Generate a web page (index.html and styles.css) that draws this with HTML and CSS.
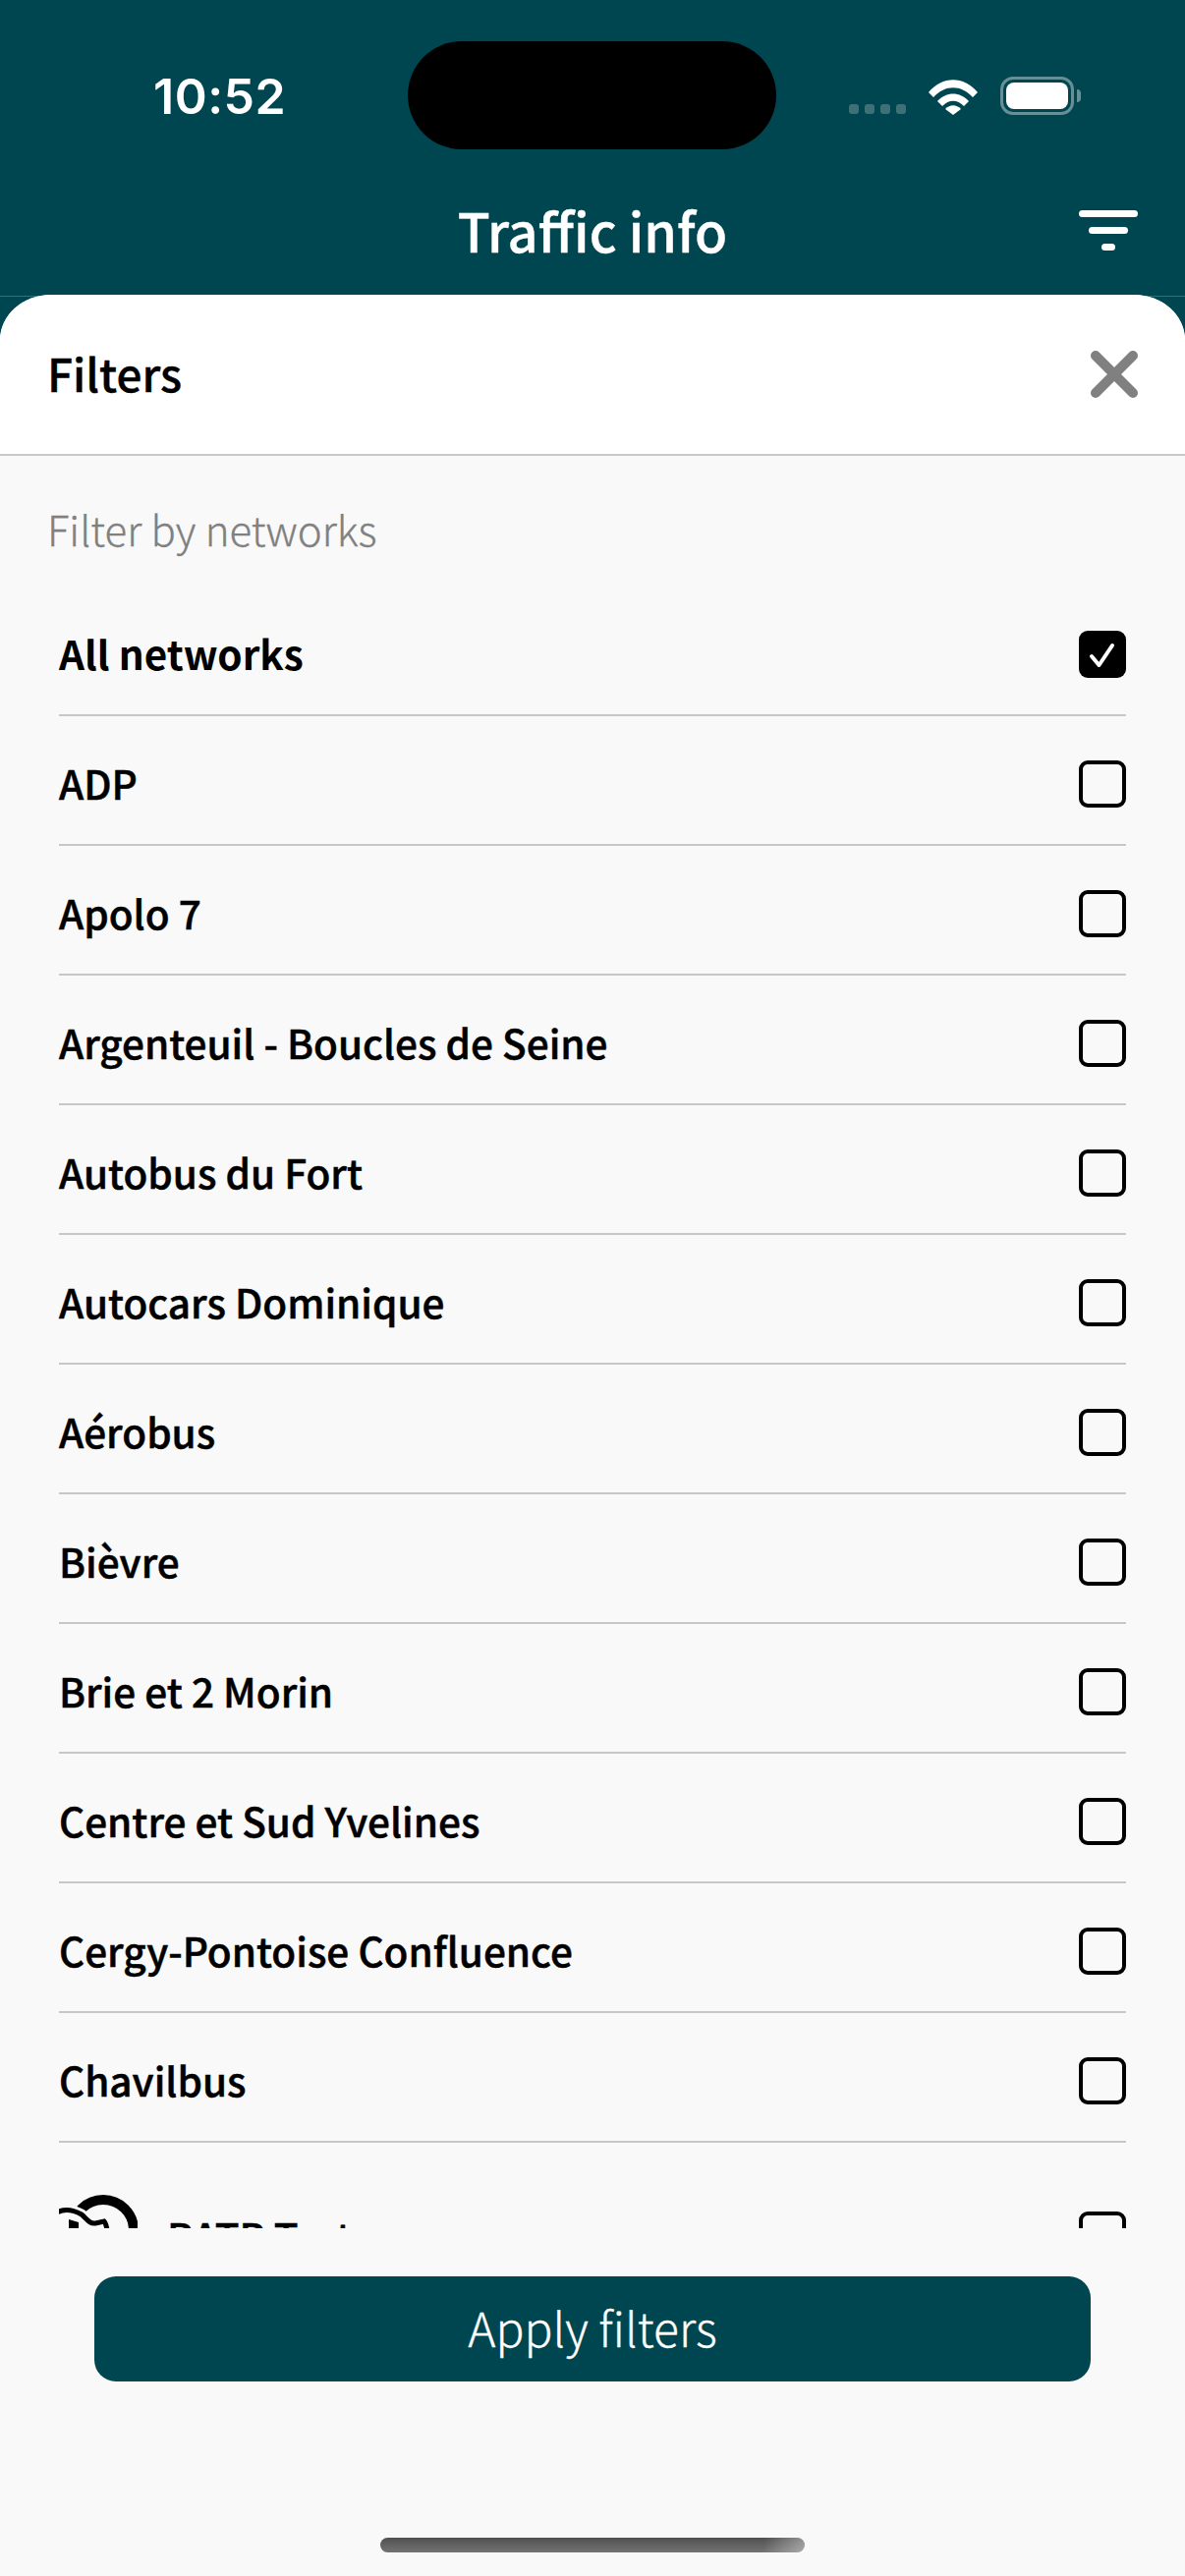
FILE: index.html
```html
<!DOCTYPE html>
<html>
<head>
  <meta charset="UTF-8">
  <title>Traffic info</title>
  <link rel="stylesheet" href="styles.css">
</head>
<body>
  <div class="screen">
    <div class="top">
      <div class="status">
        <span class="time">10:52</span>
        <div class="status-icons">
          <div class="signal"><i></i><i></i><i></i><i></i></div>
          <svg class="wifi" width="52" height="38" viewBox="0 0 52 38">
            <path d="M1 15 C15 -2 37 -2 51 15 L46 20 C34 7 18 7 6 20 Z" fill="#fff"/>
            <path d="M10 24 C19 14 33 14 42 24 L37 29 C30 22 22 22 15 29 Z" fill="#fff"/>
            <path d="M18 32 C23 27 29 27 34 32 L26 38 Z" fill="#fff"/>
          </svg>
          <div class="battery"><div class="battery-fill"></div></div>
          <div class="battery-nub"></div>
        </div>
      </div>
      <div class="island"></div>
      <div class="navbar">
        <h1>Traffic info</h1>
        <div class="filter-icon"><i class="f1"></i><i class="f2"></i><i class="f3"></i></div>
      </div>
    </div>

    <div class="sheet">
      <div class="sheet-head">
        <h2>Filters</h2>
        <svg class="close" width="48" height="48" viewBox="0 0 48 48">
          <path d="M5 5 L43 43 M43 5 L5 43" stroke="#808080" stroke-width="10" stroke-linecap="round" fill="none"/>
        </svg>
      </div>
      <div class="sheet-body">
        <div class="list-title">Filter by networks</div>
        <div class="list">
          <div class="row all"><span>All networks</span><span class="box checked">
            <svg width="48" height="48" viewBox="0 0 48 48"><path d="M13 26 L20.5 35 L34 15" stroke="#fff" stroke-width="4" stroke-linecap="round" stroke-linejoin="round" fill="none"/></svg>
          </span></div>
          <div class="row"><span>ADP</span><span class="box"></span></div>
          <div class="row"><span>Apolo 7</span><span class="box"></span></div>
          <div class="row"><span>Argenteuil - Boucles de Seine</span><span class="box"></span></div>
          <div class="row"><span>Autobus du Fort</span><span class="box"></span></div>
          <div class="row"><span>Autocars Dominique</span><span class="box"></span></div>
          <div class="row"><span>Aérobus</span><span class="box"></span></div>
          <div class="row"><span>Bièvre</span><span class="box"></span></div>
          <div class="row"><span>Brie et 2 Morin</span><span class="box"></span></div>
          <div class="row"><span>Centre et Sud Yvelines</span><span class="box"></span></div>
          <div class="row"><span>Cergy-Pontoise Confluence</span><span class="box"></span></div>
          <div class="row"><span>Chavilbus</span><span class="box"></span></div>
          <div class="row logo-row">
            <span class="logo-name">
              <svg class="ratp" width="80" height="90" viewBox="0 -3 80 90">
                <circle cx="45" cy="37" r="31" stroke="#000" stroke-width="10" fill="none"/>
                <path d="M-4 20 C4 15 14 16 23 21 C28 25 31 31 37 30 L46 28 C48 30 48 33 50 40 L30 60 L10 60 L10 40" fill="#f9f9f9"/>
                <path d="M-4 20 C4 15 14 16 23 21 C28 25 31 31 37 30 L46 28 C48 30 48 33 50 40" stroke="#f9f9f9" stroke-width="11" fill="none"/>
                <path d="M-4 20 C4 15 14 16 23 21 C28 25 31 31 37 30 L46 28 C48 30 48 33 50 40" stroke="#000" stroke-width="5" fill="none"/>
                <path d="M10 26 L20 29 L20 40 L10 40 Z" fill="#000"/>
              </svg>
              <span>RATP Test</span>
            </span>
            <span class="box"></span>
          </div>
        </div>
      </div>
      <div class="foot">
        <button class="apply">Apply filters</button>
        <div class="home-bar"></div>
      </div>
    </div>
  </div>
</body>
</html>
```

FILE: styles.css
```css
html, body {
  margin: 0;
  padding: 0;
}
body {
  font-family: "Noto Sans CJK SC", "Noto Sans", sans-serif;
  background-color: #004650;
}
.screen {
  width: 1206px;
  height: 2622px;
  display: flex;
  flex-direction: column;
  overflow: hidden;
}
.top {
  position: relative;
  height: 302px;
  flex: none;
  box-sizing: border-box;
  border-bottom: 1px solid #3a6c74;
  color: #fff;
}
.status {
  height: 190px;
  padding: 0 106px 0 156px;
  display: flex;
  justify-content: space-between;
  align-items: flex-start;
  box-sizing: border-box;
}
.time {
  margin-top: 63px;
  font-family: Inter, sans-serif;
  font-size: 50px;
  line-height: 70px;
  font-weight: 600;
  letter-spacing: 0.5px;
}
.status-icons {
  margin-top: 78px;
  display: flex;
  align-items: flex-start;
}
.signal {
  margin: 28px 22px 0 0;
  display: flex;
  gap: 6px;
}
.signal i {
  width: 10px;
  height: 10px;
  border-radius: 3px;
  background-color: #3f7078;
}
.wifi {
  margin-top: 1px;
  margin-right: 22px;
}
.battery {
  width: 75px;
  height: 39px;
  padding: 3px;
  box-sizing: border-box;
  border: 3px solid #669096;
  border-radius: 13px;
}
.battery-fill {
  height: 100%;
  background-color: #fff;
  border-radius: 8px;
}
.battery-nub {
  width: 4px;
  height: 13px;
  margin: 13px 0 0 3px;
  background-color: #669096;
  border-radius: 0 4px 4px 0;
}
.island {
  position: absolute;
  left: 415px;
  top: 42px;
  width: 375px;
  height: 110px;
  background-color: #000;
  border-radius: 55px;
}
.navbar {
  height: 110px;
  position: relative;
  display: flex;
  justify-content: center;
  align-items: flex-start;
}
h1 {
  margin: 0;
  margin-top: 12px;
  font-size: 54px;
  line-height: 64px;
  font-weight: 500;
  -webkit-text-stroke: 0.4px #fff;
}
.filter-icon {
  position: absolute;
  right: 48px;
  top: 24px;
  width: 60px;
  display: flex;
  flex-direction: column;
  align-items: center;
  gap: 10px;
}
.filter-icon i {
  height: 7px;
  background-color: #fff;
  border-radius: 4px;
}
.f1 { width: 60px; }
.f2 { width: 40px; }
.f3 { width: 14px; }

.sheet {
  position: relative;
  flex: 1;
  margin-top: -2px;
  display: flex;
  flex-direction: column;
  background-color: #f9f9f9;
  border-radius: 52px 52px 0 0 / 46px 46px 0 0;
  overflow: hidden;
}
.sheet-head {
  height: 164px;
  flex: none;
  box-sizing: border-box;
  padding: 0 48px 0 48px;
  background-color: #fff;
  border-bottom: 2px solid #c8c8c8;
  display: flex;
  justify-content: space-between;
  align-items: center;
}
h2 {
  margin: 0 0 5px;
  font-size: 46px;
  font-weight: 500;
  color: #000;
  -webkit-text-stroke: 0.4px #000;
}
.sheet-body {
  height: 1804px;
  flex: none;
  overflow: hidden;
}
.list-title {
  margin: 46px 0 0 48px;
  height: 56px;
  font-size: 42px;
  line-height: 56px;
  font-weight: 300;
  color: #808080;
  -webkit-text-stroke: 0.3px #808080;
}
.list {
  margin: 31px 60px 0;
}
.row {
  height: 132px;
  box-sizing: border-box;
  padding-top: 8px;
  border-bottom: 2px solid #c8c8c8;
  display: flex;
  justify-content: space-between;
  align-items: center;
  font-size: 40.5px;
  font-weight: 500;
  color: #000;
  -webkit-text-stroke: 0.5px #000;
}
.row > span:first-child {
  margin-bottom: 3px;
}
.row.all {
  font-weight: 700;
  -webkit-text-stroke: 0;
}
.row.logo-row {
  height: auto;
  padding: 49px 0;
  border-bottom: none;
}
.row.logo-row > span:first-child {
  margin-bottom: 0;
}
.box {
  width: 48px;
  height: 48px;
  box-sizing: border-box;
  border: 4.5px solid #000;
  border-radius: 9px;
  flex: none;
}
.box.checked {
  border: none;
  background-color: #000;
}
.box svg {
  display: block;
}
.logo-name {
  display: flex;
  align-items: center;
  gap: 30px;
}
.foot {
  flex: 1;
  padding-top: 49px;
  display: flex;
  flex-direction: column;
  align-items: center;
}
.apply {
  width: 1014px;
  height: 107px;
  padding: 0 0 6px;
  border: none;
  border-radius: 22px;
  background-color: #004650;
  color: #fff;
  font-family: "Noto Sans CJK SC", "Noto Sans", sans-serif;
  font-size: 48px;
  font-weight: 300;
  -webkit-text-stroke: 0.3px #fff;
}
.home-bar {
  width: 432px;
  height: 15px;
  margin-top: 159px;
  border-radius: 8px;
  background: linear-gradient(100deg, transparent 90%, rgba(255, 255, 255, 0.4)), linear-gradient(#505050, #737373);
}
```
